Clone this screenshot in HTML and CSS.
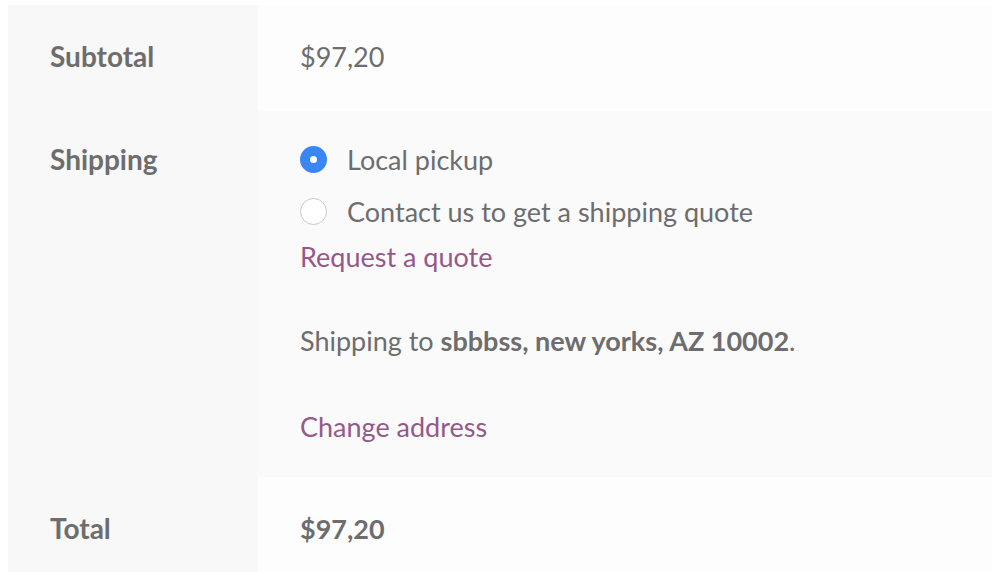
FILE: index.html
```html
<!DOCTYPE html>
<html lang="en">
<head>
<meta charset="utf-8">
<title>Cart totals</title>
<link rel="stylesheet" href="styles.css">
</head>
<body>
<div class="page">
  <table class="totals">
    <tr class="row-subtotal">
      <th>Subtotal</th>
      <td>$97,20</td>
    </tr>
    <tr class="row-shipping">
      <th>Shipping</th>
      <td>
        <ul class="methods">
          <li><span class="radio checked"></span><span class="label">Local pickup</span></li>
          <li><span class="radio"></span><span class="label">Contact us to get a shipping quote</span></li>
        </ul>
        <a class="link quote" href="#">Request a quote</a>
        <p class="dest">Shipping to <strong>sbbbss, new yorks, AZ 10002</strong>.</p>
        <a class="link" href="#">Change address</a>
      </td>
    </tr>
    <tr class="row-total">
      <th>Total</th>
      <td><strong>$97,20</strong></td>
    </tr>
  </table>
</div>
</body>
</html>
```
FILE: styles.css
```css
html, body {
  margin: 0;
  padding: 0;
  background: #ffffff;
}
.page {
  padding: 5px 0 0 8px;
  font-family: Lato, "Liberation Sans", sans-serif;
  font-size: 27px;
  line-height: 45px;
  color: #6d6d6d;
}
.totals {
  width: 100%;
  border-collapse: collapse;
  border-spacing: 0;
}
.totals th {
  width: 166px;
  text-align: left;
  vertical-align: top;
  font-weight: 700;
  font-size: 28px;
  background: #f8f8f8;
  padding: 29px 42px;
}
.totals td {
  vertical-align: top;
  padding: 29px 42px;
  background: #fdfdfd;
}
.row-subtotal th,
.row-subtotal td {
  padding-bottom: 32px;
}
.row-shipping th {
  padding-top: 26px;
}
.row-shipping td {
  background: #fafafa;
  padding-top: 26px;
  padding-bottom: 28px;
}
.methods {
  list-style: none;
  margin: 0;
  padding: 0;
}
.methods li {
  display: flex;
  align-items: center;
  margin-bottom: 7px;
}
.methods li:last-child {
  margin-bottom: 0;
}
.radio {
  box-sizing: border-box;
  width: 27px;
  height: 27px;
  border-radius: 50%;
  border: 1px solid #c8c8c8;
  background: #ffffff;
  margin-right: 20px;
  flex: none;
}
.radio.checked {
  border: 10px solid #3b86f5;
  background: #ffffff;
}
.link {
  display: block;
  color: #96588a;
  text-decoration: none;
}
.dest {
  margin: 39px 0 41px;
}
.dest strong, .row-total strong {
  font-weight: 700;
}
```
